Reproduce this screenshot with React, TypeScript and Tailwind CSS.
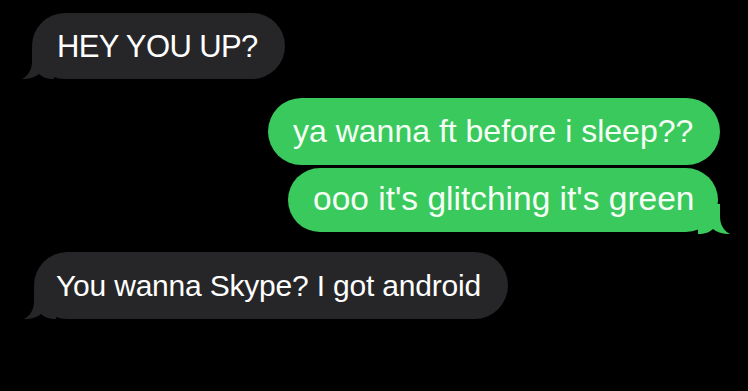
import React from "react";

const GRAY = "#262628";
const GREEN = "#3ac95c";

function Tail({ color, side }: { color: string; side: "left" | "right" }) {
  return (
    <svg
      width="32"
      height="30"
      viewBox="0 0 32 30"
      className={
        side === "left"
          ? "absolute left-[-10px] bottom-0"
          : "absolute right-[-12px] bottom-[-2px] scale-x-[-1]"
      }
    >
      <path
        d="M10 0 L10 12 C10 20 7 26 0 30 C7 30.3 13 28.3 17 25 C20 28 25 30 32 30 L32 0 Z"
        fill={color}
      />
    </svg>
  );
}

export default function App() {
  return (
    <div
      className="w-[748px] h-[391px] bg-black overflow-hidden flex flex-col pt-[13px]"
      style={{ fontFamily: '"Liberation Sans", Arial, sans-serif' }}
    >
      <div className="relative ml-[32px] w-[253px] h-[66px] rounded-full bg-[#262628] flex items-center pl-[25px] text-white text-[31px] tracking-[-0.6px] leading-none">
        <Tail color={GRAY} side="left" />
        <span className="relative">HEY YOU UP?</span>
      </div>

      <div className="mt-[19px] ml-[268px] w-[452px] h-[67px] rounded-full bg-[#3ac95c] flex items-center pl-[25px] text-[#f6fff6] text-[32px] leading-none">
        <span className="relative -mt-[2px]">ya wanna ft before i sleep??</span>
      </div>

      <div className="relative mt-[3px] ml-[288px] w-[430px] h-[64px] rounded-full bg-[#3ac95c] flex items-center pl-[25px] text-[#f6fff6] text-[33.5px] leading-none">
        <Tail color={GREEN} side="right" />
        <span className="relative -mt-[2px]">ooo it's glitching it's green</span>
      </div>

      <div className="relative mt-[20px] ml-[34px] w-[474px] h-[67px] rounded-full bg-[#262628] flex items-center pl-[22px] text-white text-[30px] tracking-[-0.2px] leading-none">
        <Tail color={GRAY} side="left" />
        <span className="relative">You wanna Skype? I got android</span>
      </div>
    </div>
  );
}
